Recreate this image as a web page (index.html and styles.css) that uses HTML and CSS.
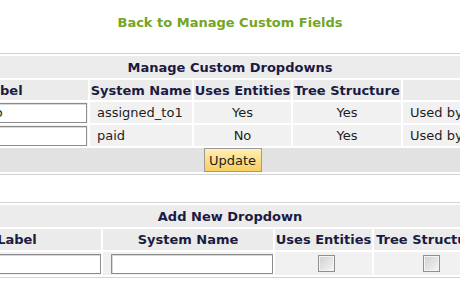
FILE: index.html
```html
<!DOCTYPE html>
<html lang="en">
<head>
    <meta charset="UTF-8">
    <title>Manage Custom Dropdowns</title>
    <link rel="stylesheet" href="styles.css">
</head>
<body>
    <div class="back">
        <a href="#">Back to Manage Custom Fields</a>
    </div>

    <table class="grid manage">
        <colgroup>
            <col class="c-label">
            <col class="c-system">
            <col class="c-uses">
            <col class="c-tree">
            <col class="c-used">
        </colgroup>
        <tr class="title-row">
            <th colspan="5">Manage Custom Dropdowns</th>
        </tr>
        <tr class="head-row">
            <th class="left">Label</th>
            <th>System Name</th>
            <th>Uses Entities</th>
            <th>Tree Structure</th>
            <th></th>
        </tr>
        <tr class="data-row">
            <td><input type="text" class="field label-field" value="Assigned To"></td>
            <td class="sys">assigned_to1</td>
            <td class="center">Yes</td>
            <td class="center">Yes</td>
            <td class="used">Used by 2 fields</td>
        </tr>
        <tr class="data-row">
            <td><input type="text" class="field label-field" value="Paid"></td>
            <td class="sys">paid</td>
            <td class="center">No</td>
            <td class="center">Yes</td>
            <td class="used">Used by 1 field</td>
        </tr>
        <tr class="update-row">
            <td colspan="5"><button class="update-btn">Update</button></td>
        </tr>
    </table>

    <table class="grid add">
        <colgroup>
            <col class="a-label">
            <col class="a-system">
            <col class="a-uses">
            <col class="a-tree">
            <col class="a-action">
        </colgroup>
        <tr class="title-row">
            <th colspan="5">Add New Dropdown</th>
        </tr>
        <tr class="head-row2">
            <th>Label</th>
            <th>System Name</th>
            <th>Uses Entities</th>
            <th>Tree Structure</th>
            <th></th>
        </tr>
        <tr class="input-row">
            <td class="right"><input type="text" class="field new-field"></td>
            <td class="right"><input type="text" class="field new-field"></td>
            <td class="center"><span class="check"></span></td>
            <td class="center"><span class="check"></span></td>
            <td></td>
        </tr>
    </table>
</body>
</html>
```

FILE: styles.css
```css
body {
    margin: 0;
    height: 288px;
    overflow: hidden;
    background-color: #fff;
    font-family: "DejaVu Sans", Verdana, sans-serif;
    font-size: 13px;
    color: #1e1e1e;
    display: flex;
    flex-direction: column;
    align-items: center;
}

.back {
    margin-top: 13px;
    line-height: 20px;
}

.back a {
    color: #74a524;
    font-weight: bold;
    text-decoration: none;
}

.grid {
    flex-shrink: 0;
    table-layout: fixed;
    border: 1px solid #d2d2d2;
    border-spacing: 2px;
    background-color: #fff;
}

.grid th,
.grid td {
    padding: 0;
    white-space: nowrap;
    overflow: hidden;
}

.grid th {
    background-color: #ebebeb;
    color: #1b1b42;
    font-weight: bold;
}

.manage {
    width: 620px;
    margin-top: 20px;
}

.c-label { width: 165px; }
.c-system { width: 102px; }
.c-uses { width: 97px; }
.c-tree { width: 108px; }
.c-used { width: 134px; }

.title-row th {
    height: 22px;
    background-color: #ececec;
}

.head-row th {
    height: 20px;
}

.head-row th.left {
    text-align: left;
    padding-left: 60px;
}

.data-row td {
    height: 21px;
    background-color: #f1f1f1;
}

.sys {
    padding-left: 7px !important;
}

.used {
    padding-left: 7px !important;
}

.center {
    text-align: center;
}

.right {
    text-align: right;
}

.field {
    box-sizing: border-box;
    height: 20px;
    margin: 0;
    padding: 0 2px;
    border: 1px solid #8c8c8c;
    box-shadow: inset 1px 1px 0 #d8d8d8;
    background-color: #fff;
    font-family: "DejaVu Sans", Verdana, sans-serif;
    font-size: 13px;
    color: #1e1e1e;
    vertical-align: middle;
}

.label-field {
    width: 164px;
}

.update-row td {
    height: 24px;
    background-color: #e2e2e2;
    text-align: center;
}

.update-btn {
    box-sizing: border-box;
    width: 58px;
    height: 24px;
    margin: 0 0 0 5px;
    padding: 0;
    border: 1px solid #9b9b9b;
    background: linear-gradient(#fff0b4, #f8cf60);
    font-family: "DejaVu Sans", Verdana, sans-serif;
    font-size: 13px;
    color: #1e1e1e;
    vertical-align: middle;
}

.add {
    width: 600px;
    margin-top: 27px;
}

.a-label { width: 168px; }
.a-system { width: 170px; }
.a-uses { width: 97px; }
.a-tree { width: 110px; }
.a-action { width: 41px; }

.head-row2 th {
    height: 21px;
}

.input-row td {
    height: 23px;
    background-color: #f1f1f1;
}

.new-field {
    width: 162px;
}

.check {
    display: inline-block;
    box-sizing: border-box;
    width: 17px;
    height: 17px;
    margin-left: 6px;
    border: 1px solid #8f8f8f;
    box-shadow: inset 0 0 0 1px #f4f4f4;
    background: linear-gradient(135deg, #cfcfcf, #f6f6f6);
    vertical-align: middle;
}
```
